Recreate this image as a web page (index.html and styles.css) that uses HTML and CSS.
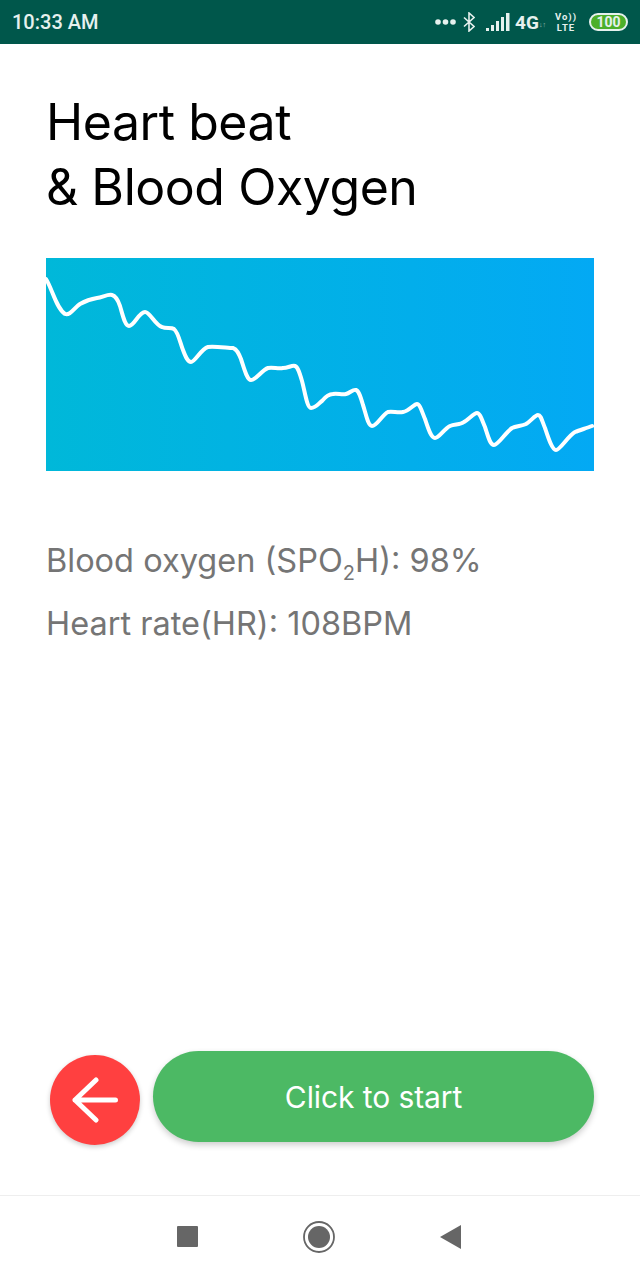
FILE: index.html
```html
<!DOCTYPE html>
<html>
<head>
  <title>Heart beat &amp; Blood Oxygen</title>
  <link rel="stylesheet" href="styles.css">
</head>
<body>
  <div class="phone">
    <!-- Status bar -->
    <div class="status-bar">
      <span class="status-time">10:33 AM</span>
      <div class="status-icons">
        <svg class="dots" width="21" height="6" viewBox="0 0 21 6"><circle cx="3" cy="3" r="2.800"/><circle cx="10.5" cy="3" r="2.800"/><circle cx="18" cy="3" r="2.800"/></svg>
        <svg class="bluetooth" width="12" height="20" viewBox="0 0 12 20"><path d="M1 5.5l10 9-5 4.5V1l5 4.5-10 9" fill="none" stroke="#e6f1ee" stroke-width="1.6"/></svg>
        <svg class="signal" width="24" height="18" viewBox="0 0 24 18"><rect x="0" y="15" width="3" height="3"/><rect x="5" y="12" width="3" height="6"/><rect x="10" y="8" width="3" height="10"/><rect x="15" y="4" width="3" height="14"/><rect x="20" y="0" width="3.500" height="18"/></svg>
        <span class="net">4G</span>
        <span class="net-arrows">↓↑</span>
        <span class="volte"><span>Vo))</span><span>LTE</span></span>
        <span class="battery">100</span>
      </div>
    </div>

    <!-- Main content -->
    <div class="content">
      <h1 class="title">Heart beat<br>&amp; Blood Oxygen</h1>

      <div class="chart">
        <svg width="548" height="213" viewBox="46 258 548 213">
          <path class="chart-line" d="M46 279 C52 288 56 308 65 314 C70 316 74 308 80 304 C87 300 91 299 97 298 C103 297 108 294 112 295 C116 296 118 300 120 306 C123 316 125 326 129 326 C134 326 139 312 145 312 C150 312 155 325 162 327 C166 329 171 327 174 329 C178 332 180 342 183 350 C186 358 188 362 191 362 C195 362 201 349 208 347 C214 346 228 348 233 348 C237 349 239 354 241 359 C244 368 247 380 251 380 C256 380 262 370 268 368 C273 367 278 369 283 368 C288 368 292 365 295 366 C298 367 300 374 302 381 C305 392 307 408 311 408 C316 408 319 403 322 401 C326 396 329 394 333 394 C337 393 342 395 346 394 C350 393 353 389 356 390 C359 391 361 398 363 405 C366 414 368 426 372 426 C377 426 382 415 388 412 C392 411 398 413 403 412 C409 411 414 404 417 404 C420 404 422 412 425 419 C428 428 431 438 435 438 C439 438 444 429 450 426 C455 424 460 425 464 422 C469 419 474 413 477 413 C480 413 482 420 485 427 C488 436 490 445 494 445 C498 445 506 432 512 428 C516 426 522 426 526 424 C531 421 535 415 538 415 C541 415 542 421 545 428 C548 437 552 450 556 450 C560 450 568 436 575 432 C580 430 587 428 592 426"/>
        </svg>
      </div>

      <p class="reading">Blood oxygen (SPO<sub>2</sub>H): 98%</p>
      <p class="reading">Heart rate(HR): 108BPM</p>

      <div class="actions">
        <button class="back-btn">
          <svg width="46" height="46" viewBox="0 0 46 46"><path d="M43.500 23H3M24 3L3 23l21 20" fill="none" stroke="#ffffff" stroke-width="5" stroke-linecap="round" stroke-linejoin="round"/></svg>
        </button>
        <button class="start-btn">Click to start</button>
      </div>
    </div>

    <!-- Navigation bar -->
    <div class="nav-bar">
      <span class="nav-square"></span>
      <svg width="32" height="32" viewBox="0 0 32 32"><circle cx="16" cy="16" r="15" fill="none" stroke="#666666" stroke-width="1.800"/><circle cx="16" cy="16" r="11" fill="#666666"/></svg>
      <svg width="21" height="24" viewBox="0 0 21 24"><path d="M0 12L21 0V24Z" fill="#666666"/></svg>
    </div>
  </div>
</body>
</html>
```

FILE: styles.css
```css
* {
  box-sizing: border-box;
}

body {
  margin: 0;
  background-color: #ffffff;
  font-family: "Inter", "Roboto", sans-serif;
}

.phone {
  display: flex;
  flex-direction: column;
  width: 640px;
  height: 1280px;
  overflow: hidden;
}

/* Status bar */
.status-bar {
  display: flex;
  flex: none;
  justify-content: space-between;
  align-items: center;
  height: 44px;
  padding: 0 12px;
  background-color: #00574b;
  color: #e6f1ee;
  font-family: "Roboto", sans-serif;
}

.status-time {
  font-size: 20px;
  font-weight: 500;
}

.status-icons {
  display: flex;
  align-items: center;
}

.status-icons svg {
  fill: #e6f1ee;
}

.bluetooth {
  margin-left: 7px;
}

.signal {
  margin-left: 11px;
}

.net {
  margin-left: 5px;
  font-size: 19px;
  font-weight: 700;
}

.net-arrows {
  width: 8px;
  font-size: 7px;
  opacity: 0.6;
  margin-top: 6px;
  white-space: nowrap;
  overflow: hidden;
}

.volte {
  display: flex;
  flex-direction: column;
  align-items: center;
  margin-left: 8px;
  font-size: 9.5px;
  font-weight: 700;
  line-height: 11px;
  letter-spacing: 1px;
}

.battery {
  width: 39px;
  height: 18px;
  margin-left: 12px;
  border: 2px solid #e6f1ee;
  border-radius: 9px;
  background-color: #4caf2a;
  font-size: 14px;
  font-weight: 700;
  line-height: 14px;
  text-align: center;
}

/* Main content */
.content {
  display: flex;
  flex: 1;
  flex-direction: column;
  padding: 46px 46px 0;
}

.title {
  margin: 0 0 38px;
  color: #000000;
  font-size: 50px;
  font-weight: 400;
  line-height: 65px;
  letter-spacing: -0.45px;
}

.chart {
  flex: none;
  height: 213px;
  margin-bottom: 58px;
  background: linear-gradient(90deg, #00b8d9, #03a9f4);
}

.chart svg {
  display: block;
}

.chart-line {
  fill: none;
  stroke: #ffffff;
  stroke-width: 4;
  stroke-linecap: round;
}

.reading {
  margin: 0;
  color: #757575;
  font-size: 32.5px;
  line-height: 63px;
}

.reading sub {
  font-size: 20px;
  line-height: 0;
}

.actions {
  display: flex;
  align-items: flex-start;
  margin-top: auto;
  margin-bottom: 50px;
}

.back-btn {
  display: flex;
  flex: none;
  justify-content: center;
  align-items: center;
  width: 90px;
  height: 90px;
  margin: 4px 13px 0 4px;
  padding: 0;
  border: none;
  border-radius: 50%;
  background-color: #ff4040;
  box-shadow: 0 2px 5px rgba(0, 0, 0, 0.2);
}

.start-btn {
  flex: 1;
  height: 91px;
  padding: 0;
  border: none;
  border-radius: 46px;
  background-color: #4cb964;
  box-shadow: 0 3px 6px rgba(0, 0, 0, 0.2);
  color: #ffffff;
  font-family: inherit;
  font-size: 30px;
  letter-spacing: -0.1px;
}

/* Navigation bar */
.nav-bar {
  display: flex;
  flex: none;
  justify-content: center;
  align-items: center;
  gap: 105px;
  height: 85px;
  padding: 0 3px 3px 0;
  border-top: 1px solid #eeeeee;
}

.nav-square {
  width: 21px;
  height: 21px;
  border-radius: 1px;
  background-color: #666666;
}
```
